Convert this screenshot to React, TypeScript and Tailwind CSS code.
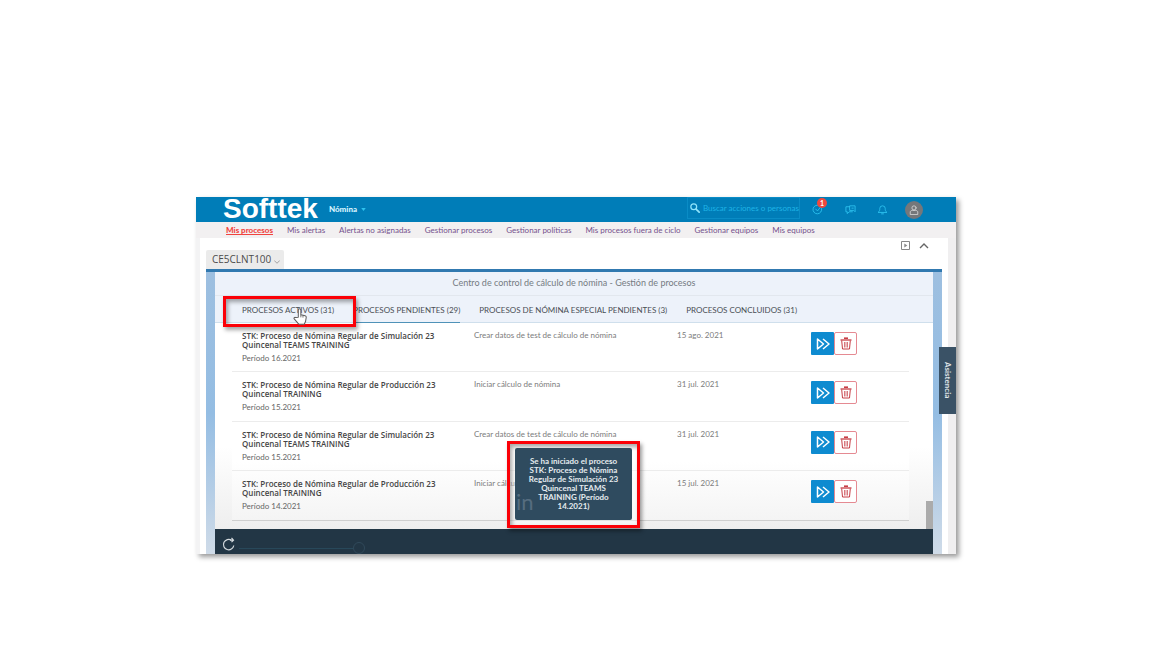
import type { ReactNode } from "react";

const NAV = [
  "Mis procesos",
  "Mis alertas",
  "Alertas no asignadas",
  "Gestionar procesos",
  "Gestionar políticas",
  "Mis procesos fuera de ciclo",
  "Gestionar equipos",
  "Mis equipos",
];

const TABS = [
  "PROCESOS ACTIVOS (31)",
  "PROCESOS PENDIENTES (29)",
  "PROCESOS DE NÓMINA ESPECIAL PENDIENTES (3)",
  "PROCESOS CONCLUIDOS (31)",
];

type Process = { name: string; period: string; step: string; date: string };

const ROWS: Process[] = [
  {
    name: "STK: Proceso de Nómina Regular de Simulación 23 Quincenal TEAMS TRAINING",
    period: "Período 16.2021",
    step: "Crear datos de test de cálculo de nómina",
    date: "15 ago. 2021",
  },
  {
    name: "STK: Proceso de Nómina Regular de Producción 23 Quincenal TRAINING",
    period: "Período 15.2021",
    step: "Iniciar cálculo de nómina",
    date: "31 jul. 2021",
  },
  {
    name: "STK: Proceso de Nómina Regular de Simulación 23 Quincenal TEAMS TRAINING",
    period: "Período 15.2021",
    step: "Crear datos de test de cálculo de nómina",
    date: "31 jul. 2021",
  },
  {
    name: "STK: Proceso de Nómina Regular de Producción 23 Quincenal TRAINING",
    period: "Período 14.2021",
    step: "Iniciar cálculo de nómina",
    date: "15 jul. 2021",
  },
];

function Icon({ children, className }: { children: ReactNode; className: string }) {
  return (
    <svg viewBox="0 0 24 24" fill="none" stroke="currentColor" strokeWidth="2" strokeLinecap="round" strokeLinejoin="round" className={className} aria-hidden="true">
      {children}
    </svg>
  );
}

function Header() {
  return (
    <header className="flex h-[25px] items-center bg-[#007db8] pl-[27px] pr-[33px] text-white">
      <a href="#inicio" className="self-start font-['Liberation_Sans',sans-serif] text-[28px] leading-[24px] font-bold">
        Softtek
      </a>
      <button type="button" className="mb-px ml-[11px] flex items-center gap-1 text-[8px] leading-3 font-black text-[#d9f3ff]">
        Nómina
        <svg viewBox="0 0 6 4" className="h-[3px] w-[5px] fill-[#2fc3ee]" aria-hidden="true">
          <path d="M0 0h6L3 4z" />
        </svg>
      </button>
      <div className="mb-[3px] ml-auto flex h-[22px] w-[113px] items-center gap-[3px] border border-[#0a8cc6] pl-[2px]">
        <Icon className="h-[10px] w-[10px] shrink-0 text-[#8fe4fb]">
          <circle cx="9" cy="9" r="7" strokeWidth="3" />
          <path d="M14.500 14.500 22 22" strokeWidth="4" />
        </Icon>
        <input
          type="text"
          aria-label="Buscar acciones o personas"
          placeholder="Buscar acciones o personas"
          className="w-full min-w-0 bg-transparent text-[8px] leading-3 text-white placeholder:text-[#1fb3e6] focus:outline-none"
        />
      </div>
      <div className="ml-3 flex items-center text-[#2cc0ee]">
        <button type="button" aria-label="Tareas pendientes" className="relative">
          <Icon className="h-[11px] w-[11px]">
            <path d="M21 10a9.500 9.500 0 1 1-6-7" />
            <path d="m8 11 4 4 8-10" />
          </Icon>
          <span className="absolute -top-[6px] left-[5px] flex h-[10px] w-[10px] items-center justify-center rounded-full bg-[#f0483e] text-[7px] leading-[10px] font-bold text-white">
            1
          </span>
        </button>
        <button type="button" aria-label="Comentarios" className="ml-[22px]">
          <Icon className="h-[11px] w-[11px]">
            <path d="M10 6H2v11h3v4l4-4h7" />
            <path d="M11 4h11v13l-3-3h-8z" />
            <path d="M15 9h3" />
          </Icon>
        </button>
        <button type="button" aria-label="Notificaciones" className="ml-[21px]">
          <Icon className="h-[11px] w-[11px]">
            <path d="M3 18c3-2 3-5 3-8a6 6 0 0 1 12 0c0 3 0 6 3 8z" />
            <path d="M10 21.500h4" />
          </Icon>
        </button>
        <button type="button" aria-label="Cuenta" className="ml-[17px] flex h-[18px] w-[18px] items-center justify-center rounded-full bg-[#75777a] text-[#d9d9d9]">
          <Icon className="h-[10px] w-[10px]">
            <circle cx="12" cy="7" r="5" />
            <path d="M3 22v-5c0-2 2-4 5-4h8c3 0 5 2 5 4v5z" />
          </Icon>
        </button>
      </div>
    </header>
  );
}

function Nav() {
  return (
    <nav className="flex h-4 items-center gap-[14px] bg-[#f2f0f1] pl-[30px] text-[8px] leading-4 whitespace-nowrap text-[#75508c]">
      {NAV.map((label, i) => (
        <a
          key={label}
          href="#nav"
          aria-current={i === 0 ? "page" : undefined}
          className={i === 0 ? "font-black text-[#f0443f] underline" : ""}
        >
          {label}
        </a>
      ))}
    </nav>
  );
}

function Tabs() {
  return (
    <div className="relative border-b border-[#cfdfec] bg-[#edf2fa]">
      <div role="tablist" className="-mb-px flex h-[27px] gap-[19px] pl-[27px] text-[8px] whitespace-nowrap text-[#4a4f55]">
        {TABS.map((label, i) => (
          <button
            key={label}
            type="button"
            role="tab"
            aria-selected={i === 1}
            className={i === 1 ? "border-b border-[#4f92b8] pt-px" : "border-b border-transparent pt-px"}
          >
            {label}
          </button>
        ))}
      </div>
      <div className="pointer-events-none absolute top-0 left-2 h-[31px] w-[133px] border-[3px] border-[#fb0007] shadow-[2px_3px_4px_rgba(0,0,0,0.35),inset_2px_3px_4px_rgba(0,0,0,0.35)]" />
      <svg viewBox="0 0 16 20" className="pointer-events-none absolute top-[12px] left-[78px] h-[17px] w-[14px]" aria-hidden="true">
        <path
          d="M6 11V2.500a1.500 1.500 0 0 1 3 0V8l5 1.200c1 .3 1.500 1 1.300 2L14.500 16l-1.500 3H6.500L1.200 12.800c-.8-1 .6-2.300 1.800-1.500z"
          fill="#fff"
          stroke="#5c5c5c"
          strokeWidth="1.200"
          strokeLinejoin="round"
        />
        <path d="M9 8v3M11.500 8.800v2.500" stroke="#5c5c5c" strokeWidth="1" />
      </svg>
    </div>
  );
}

function ProcessRow({ row }: { row: Process }) {
  return (
    <tr className="border-b border-[#ececec] align-top last:border-[#cfcfcf]">
      <td className="pt-2 pl-[10px]">
        <div className="font-['Open_Sans',sans-serif] font-semibold text-[#454545]">{row.name}</div>
        <div className="mt-[5px] text-[#666]">{row.period}</div>
      </td>
      <td className="pt-2 pl-[10px]">{row.step}</td>
      <td className="pt-2 pl-[10px]">{row.date}</td>
      <td className="pt-[9px] pl-[10px]">
        <div className="flex">
          <button type="button" aria-label="Continuar proceso" className="flex h-[23px] w-[23px] items-center justify-center rounded-[1px] bg-[#0e8bd0] text-white">
            <svg viewBox="0 0 14 12" fill="none" stroke="currentColor" strokeWidth="1.500" strokeLinejoin="round" className="h-3 w-[14px]" aria-hidden="true">
              <path d="M1.500 1v10L7.500 6z" />
              <path d="M7 1l6 5-6 5" />
            </svg>
          </button>
          <button type="button" aria-label="Eliminar proceso" className="flex h-[23px] w-[23px] items-center justify-center rounded-[2px] border border-[#e58a92] bg-white text-[#c63d45]">
            <svg viewBox="0 0 12 13" fill="none" stroke="currentColor" className="h-[13px] w-[12px]" aria-hidden="true">
              <path d="M.5 3h11" strokeWidth="1.300" />
              <path d="M4 1.200h4" strokeWidth="1.600" />
              <path d="M1.700 3.500 2.500 12h7l.8-8.500" strokeWidth="1" strokeLinejoin="round" />
              <path d="M4.500 5v5.500M6 5v5.500M7.500 5v5.500" strokeWidth=".7" />
            </svg>
          </button>
        </div>
      </td>
    </tr>
  );
}

function Toast() {
  return (
    <div className="pointer-events-none absolute bottom-[26px] left-1/2 -ml-[67px] w-[133px] border-[3px] border-[#fb0007] bg-white/40 px-[5px] pt-1 pb-[5px] shadow-[2px_3px_4px_rgba(0,0,0,0.4),inset_2px_3px_4px_rgba(0,0,0,0.35)]">
      <div role="status" className="relative rounded-[2px] bg-[#2f4b5f] px-3 py-[9px] text-center text-[8px] leading-[9px] font-bold text-[#e6ebef]">
        Se ha iniciado el proceso STK: Proceso de Nómina Regular de Simulación 23 Quincenal TEAMS TRAINING (Período 14.2021)
        <span className="absolute bottom-[6px] left-px text-[22px] leading-6 font-normal text-[#566d7f]">in</span>
      </div>
    </div>
  );
}

export default function App() {
  return (
    <div className="min-h-screen bg-white pt-[197px] pb-12 font-['Lato','Open_Sans',sans-serif]">
      <main className="relative mx-auto max-w-[760px] bg-white shadow-[3px_3px_5px_rgba(0,0,0,0.4)]">
        <Header />
        <Nav />
        <div className="border-r-[8px] border-l-[4px] border-r-[#f0eff0] border-l-[#f3f3f4] px-[6px]">
          <div className="flex h-[31px] items-end justify-between">
            <button type="button" className="flex h-[19px] items-center gap-[3px] rounded-t-[2px] bg-[#ebebeb] pr-1 pl-[6px] font-['Open_Sans',sans-serif] text-[10px] text-[#4b4b4b]">
              CE5CLNT100
              <Icon className="mt-1 h-[6px] w-[6px] text-[#8a8a8a]">
                <path d="m2 7 10 10L22 7" strokeWidth="3" />
              </Icon>
            </button>
            <div className="flex items-center gap-[9px] self-start pt-[3px] pr-[13px] text-[#888]">
              <button type="button" aria-label="Reproducir">
                <svg viewBox="0 0 9 9" className="h-[9px] w-[9px]" aria-hidden="true">
                  <path d="M.5.5h8v8h-8z" fill="none" stroke="currentColor" />
                  <path d="M3.300 2.500v4L6.300 4.500z" fill="currentColor" />
                </svg>
              </button>
              <button type="button" aria-label="Contraer">
                <svg viewBox="0 0 10 9" className="h-[9px] w-[10px]" fill="none" stroke="#666" strokeWidth="1.400" aria-hidden="true">
                  <path d="M1 7 5 3l4 4" />
                </svg>
              </button>
            </div>
          </div>

          <div className="border-t-[3px] border-[#3179b0] bg-linear-to-b from-[#9dbfe0] via-[#94bde3] to-[#cfdbe8] px-[9px]">
            <section className="relative">
              <h1 className="flex h-6 items-center justify-center border-b border-[#e2e7ee] bg-[#edf2fa] pb-px text-[9px] text-[#757b82]">
                Centro de control de cálculo de nómina - Gestión de procesos
              </h1>
              <Tabs />
              <div className="flex bg-linear-to-b from-white from-60% to-[#eeeeee]">
                <div className="min-w-0 flex-1 pr-[17px] pb-2 pl-[17px]">
                  <table className="h-[198px] w-full table-fixed border-collapse bg-linear-to-b from-white from-70% to-[#f4f4f4] text-left text-[8px] leading-[9px] text-[#7b7b7b]">
                    <colgroup>
                      <col className="w-[232px]" />
                      <col className="w-[203px]" />
                      <col className="w-[134px]" />
                      <col />
                    </colgroup>
                    <tbody>
                      {ROWS.map((row, i) => (
                        <ProcessRow key={i} row={row} />
                      ))}
                    </tbody>
                  </table>
                </div>
                <div className="flex w-[7px] flex-col justify-end">
                  <div className="h-7 bg-[#ababab]" />
                </div>
              </div>
              <footer className="flex h-[25px] items-center bg-[#223645] pl-[7px]">
                <button type="button" aria-label="Actualizar" className="mt-1 text-[#d4dade]">
                  <svg viewBox="0 0 13 14" className="h-[14px] w-[13px]" fill="none" stroke="currentColor" strokeWidth="1.200" aria-hidden="true">
                    <path d="M11.800 8.500A5.200 5.200 0 1 1 9.500 3.200" />
                    <path d="M8 3.200h3M9.500.8l2 2.400-2 2" />
                  </svg>
                </button>
                <span className="ml-1 flex flex-1 items-center self-end">
                  <span className="h-px w-[114px] bg-[#28485a]" />
                  <span className="h-3 w-3 rounded-full border border-[#30495a]" />
                </span>
              </footer>
              <Toast />
            </section>
          </div>
        </div>
        <button
          type="button"
          className="absolute top-[150px] right-0 flex h-[67px] w-[17px] items-center justify-center bg-[#3a5266] text-[8px] font-bold text-[#e3e8ec] [writing-mode:vertical-rl]"
        >
          Asistencia
        </button>
      </main>
    </div>
  );
}
